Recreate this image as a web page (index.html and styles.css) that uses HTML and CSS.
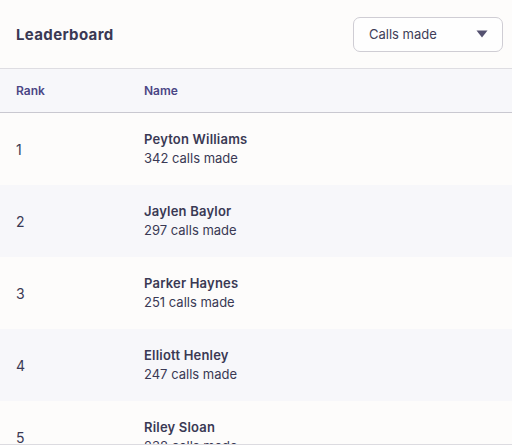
FILE: index.html
```html
<!DOCTYPE html>
<html lang="en">
<head>
    <meta charset="UTF-8">
    <meta name="viewport" content="width=device-width, initial-scale=1.0">
    <title>Leaderboard</title>
    <link rel="stylesheet" href="styles.css">
</head>
<body>

<div class="board">
    <div class="board-head">
        <h2>Leaderboard</h2>
        <div class="picker">
            <span>Calls made</span>
            <svg width="12" height="8" viewBox="0 0 12 8"><path d="M0.5 0.5 H11.5 L6 7.5 Z" fill="#545170"/></svg>
        </div>
    </div>

    <div class="row cols">
        <div class="rank">Rank</div>
        <div class="name">Name</div>
    </div>

    <!-- rows -->
    <div class="row">
        <div class="rank">1</div>
        <div class="name"><strong>Peyton Williams</strong><span>342 calls made</span></div>
    </div>
    <div class="row alt">
        <div class="rank">2</div>
        <div class="name"><strong>Jaylen Baylor</strong><span>297 calls made</span></div>
    </div>
    <div class="row">
        <div class="rank">3</div>
        <div class="name"><strong>Parker Haynes</strong><span>251 calls made</span></div>
    </div>
    <div class="row alt">
        <div class="rank">4</div>
        <div class="name"><strong>Elliott Henley</strong><span>247 calls made</span></div>
    </div>
    <div class="row">
        <div class="rank">5</div>
        <div class="name"><strong>Riley Sloan</strong><span>238 calls made</span></div>
    </div>
</div>

</body>
</html>
```

FILE: styles.css
```css
body {
    font-family: 'Inter', 'Lato', sans-serif;
    background: #fdfcfb;
    color: #3a3954;
    margin: 0;
    padding: 0;
}

.board {
    height: 444px;
    overflow: hidden;
    border-bottom: 1px solid #dcdbe0;
}

.board-head {
    height: 68px;
    display: flex;
    align-items: center;
    justify-content: space-between;
    padding: 0 9px 0 16px;
    border-bottom: 1px solid #dedde2;
}

h2 {
    margin: 0;
    font-size: 15px;
    font-weight: 700;
    letter-spacing: 0.35px;
    color: #3a3954;
}

.picker {
    width: 150px;
    height: 35px;
    box-sizing: border-box;
    border: 1px solid #cfcdd4;
    border-radius: 7px;
    background: #fefefe;
    display: flex;
    align-items: center;
    justify-content: space-between;
    padding: 0 14px 0 15px;
    font-size: 13px;
    color: #3f3d58;
}

.row {
    display: flex;
    align-items: center;
    height: 72px;
    font-size: 13px;
}

.row.alt {
    background: #f7f7fa;
}

.row.cols {
    height: 43px;
    background: #f7f7fa;
    border-bottom: 1px solid #c9c8d0;
    font-size: 12px;
    font-weight: 600;
    color: #4b4685;
}

.rank {
    width: 128px;
    padding-left: 16px;
    font-size: 14px;
}

.cols .rank {
    font-size: 12px;
}

.name strong {
    display: block;
    font-weight: 600;
    letter-spacing: 0.2px;
    line-height: 19px;
}

.name span {
    display: block;
    line-height: 19px;
}
```
